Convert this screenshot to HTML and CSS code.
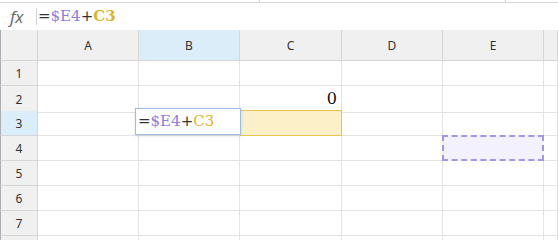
FILE: index.html
```html
<!DOCTYPE html>
<html lang="en">

<head>
    <meta charset="UTF-8">
    <title>Sheet - formula editing</title>
    <link rel="stylesheet" href="styles.css">
</head>

<body>

    <div class="top-strip">
        <div class="strip-part first"></div>
        <div class="strip-part second"></div>
        <div class="strip-part"></div>
    </div>

    <div class="formula-bar">
        <div class="fx">fx</div>
        <div class="formula">=<span class="ref-e4">$E4</span>+<span class="ref-c3 bold">C3</span></div>
    </div>

    <div class="sheet">
        <div class="row header-row">
            <div class="corner"></div>
            <div class="col-head">A</div>
            <div class="col-head selected">B</div>
            <div class="col-head">C</div>
            <div class="col-head">D</div>
            <div class="col-head">E</div>
            <div class="col-head"></div>
        </div>

        <div class="row">
            <div class="row-head">1</div>
            <div class="cell"></div><div class="cell"></div><div class="cell"></div>
            <div class="cell"></div><div class="cell"></div><div class="cell"></div>
        </div>
        <div class="row">
            <div class="row-head">2</div>
            <div class="cell"></div><div class="cell"></div><div class="cell number">0</div>
            <div class="cell"></div><div class="cell"></div><div class="cell"></div>
        </div>
        <div class="row">
            <div class="row-head selected">3</div>
            <div class="cell"></div><div class="cell"></div><div class="cell mark-c3"></div>
            <div class="cell"></div><div class="cell"></div><div class="cell"></div>
        </div>
        <div class="row">
            <div class="row-head">4</div>
            <div class="cell"></div><div class="cell"></div><div class="cell"></div>
            <div class="cell"></div><div class="cell mark-e4"></div><div class="cell"></div>
        </div>
        <div class="row">
            <div class="row-head">5</div>
            <div class="cell"></div><div class="cell"></div><div class="cell"></div>
            <div class="cell"></div><div class="cell"></div><div class="cell"></div>
        </div>
        <div class="row">
            <div class="row-head">6</div>
            <div class="cell"></div><div class="cell"></div><div class="cell"></div>
            <div class="cell"></div><div class="cell"></div><div class="cell"></div>
        </div>
        <div class="row">
            <div class="row-head">7</div>
            <div class="cell"></div><div class="cell"></div><div class="cell"></div>
            <div class="cell"></div><div class="cell"></div><div class="cell"></div>
        </div>
        <div class="row last-row">
            <div class="row-head"></div>
            <div class="cell"></div><div class="cell"></div><div class="cell"></div>
            <div class="cell"></div><div class="cell"></div><div class="cell"></div>
        </div>

        <div class="editor">=<span class="ref-e4">$E4</span>+<span class="ref-c3">C3</span></div>
    </div>

</body>

</html>
```

FILE: styles.css
```css
body {
    margin: 0;
    background: #ffffff;
    font-family: "Noto Sans", Arial, sans-serif;
    color: #333333;
    overflow: hidden;
    height: 240px;
}

.top-strip {
    display: flex;
    height: 2px;
    border-bottom: 1px solid #d6d6d6;
}

.strip-part {
    flex: 1;
}

.strip-part.first {
    flex: 0 0 259px;
    border-right: 1px solid #d6d6d6;
}

.strip-part.second {
    flex: 0 0 245px;
    border-right: 1px solid #d6d6d6;
}

.formula-bar {
    display: flex;
    align-items: center;
    height: 27px;
}

.fx {
    width: 36px;
    box-sizing: border-box;
    padding-left: 10px;
    font-family: "Open Sans", sans-serif;
    font-style: italic;
    font-size: 17px;
    color: #666666;
    line-height: 16px;
}

.formula {
    border-left: 1px solid #d0d0d0;
    padding-left: 1px;
    height: 17px;
    line-height: 17px;
    font-family: "DejaVu Serif", serif;
    font-size: 15px;
    color: #333333;
    white-space: nowrap;
}

.ref-e4 {
    color: #8d7ce4;
}

.ref-c3 {
    color: #ddb52f;
}

.bold {
    font-weight: bold;
}

.sheet {
    position: relative;
    height: 210px;
    overflow: hidden;
}

.row {
    display: grid;
    grid-template-columns: 38px 101px 101px 102px 101px 101px 14px;
    height: 25px;
}

.header-row {
    height: 31px;
}

.corner,
.col-head,
.row-head {
    background: #f0f0f0;
    border-right: 1px solid #d6d6d6;
    border-bottom: 1px solid #d6d6d6;
    box-sizing: border-box;
    display: flex;
    align-items: center;
    justify-content: center;
    font-size: 12px;
    color: #333333;
}

.corner,
.row-head {
    border-left: 1px solid #a8aeb4;
}

.col-head.selected,
.row-head.selected {
    background: #dcedfa;
}

.cell {
    border-right: 1px solid #e3e3e3;
    border-bottom: 1px solid #e3e3e3;
    box-sizing: border-box;
    position: relative;
}

.number {
    text-align: right;
    padding-right: 4px;
    font-family: "DejaVu Serif", serif;
    font-size: 16px;
    line-height: 26px;
    color: #111111;
}

.mark-c3::after {
    content: "";
    position: absolute;
    top: -1px;
    left: 0;
    right: -1px;
    bottom: -1px;
    border: 1px solid #e6c650;
    background: #fcf0c8;
}

.mark-e4::after {
    content: "";
    position: absolute;
    top: -1px;
    left: -1px;
    right: -1px;
    bottom: -1px;
    border: 2px dashed #a594e8;
    background: #f4f1ff;
}

.editor {
    position: absolute;
    top: 78px;
    left: 135px;
    width: 106px;
    height: 27px;
    box-sizing: border-box;
    border: 1px solid #9fbde4;
    background: #ffffff;
    box-shadow: 0 1px 3px rgba(0, 0, 0, 0.12);
    padding-left: 2px;
    font-family: "DejaVu Serif", serif;
    font-size: 15px;
    line-height: 24px;
    color: #333333;
    white-space: nowrap;
    z-index: 2;
}
```
